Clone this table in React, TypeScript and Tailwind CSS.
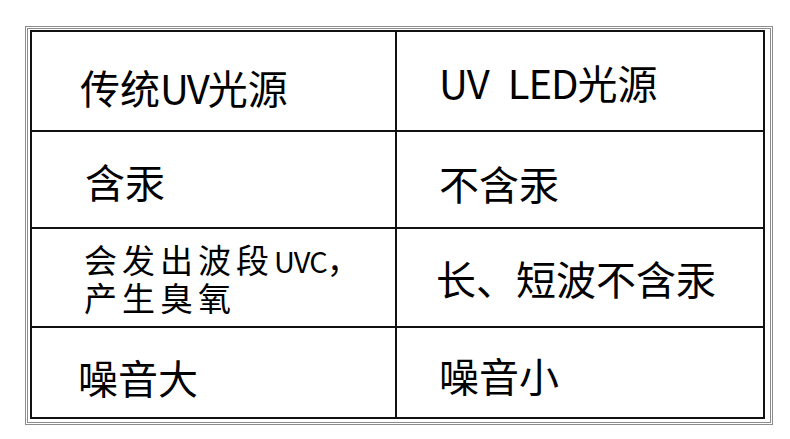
const font = { fontFamily: '"Noto Sans CJK SC", "Noto Sans", sans-serif' };

export default function App() {
  return (
    <div className="w-[790px] h-[439px] bg-white pl-[25px] pt-[26px]" style={font}>
      {/* outer thin frame */}
      <div className="w-[748px] h-[399px] border-[3px] border-double border-[#8c8c8c] pl-[2px] pt-[1px] pr-[5px] pb-[3px]">
        {/* table: black background shows through gaps as rules */}
        <div className="grid h-full w-full grid-cols-[363px_1fr] grid-rows-[98px_95px_97px_1fr] gap-[2px] bg-[#111] p-[2px] text-black">
          <div className="flex items-center bg-white pl-[48px] pt-[12px] text-[40px] leading-none">
            <span>
              传统<span className="tracking-[-2px]">UV</span>光源
            </span>
          </div>
          <div className="flex items-center bg-white pl-[42px] pt-[2px] text-[40px] leading-none">
            <span>
              <span className="tracking-[-1px]">UV</span> <span className="ml-[10px] tracking-[-1px]">LED</span>光源
            </span>
          </div>

          <div className="flex items-center bg-white pl-[53px] pt-[2px] text-[40px] leading-none">
            含汞
          </div>
          <div className="flex items-center bg-white pl-[42px] pt-[6px] text-[40px] leading-none">
            不含汞
          </div>

          <div className="flex flex-col justify-center gap-[2px] bg-white pl-[52px] pt-[2px] text-[33px] leading-[35px] tracking-[5px]">
            <div>
              会发出波段<span className="text-[29px] tracking-[-1px]">UVC</span>，
            </div>
            <div>产生臭氧</div>
          </div>
          <div className="flex items-center bg-white pl-[39px] text-[40px] leading-none">
            长、短波不含汞
          </div>

          <div className="flex items-center bg-white pl-[46px] pt-[8px] text-[40px] leading-none">
            噪音大
          </div>
          <div className="flex items-center bg-white pl-[42px] pt-[5px] text-[40px] leading-none">
            噪音小
          </div>
        </div>
      </div>
    </div>
  );
}
